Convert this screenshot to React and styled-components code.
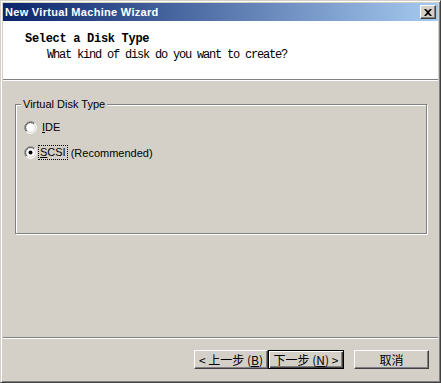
import React from "react";
import styled, { createGlobalStyle } from "styled-components";

const GlobalStyles = createGlobalStyle`
  html, body {
    margin: 0;
    padding: 0;
    width: 441px;
    height: 383px;
    overflow: hidden;
    background: #d4d0c8;
  }
`;

const Window = styled.div`
  box-sizing: border-box;
  width: 441px;
  height: 383px;
  display: flex;
  flex-direction: column;
  background: #d4d0c8;
  border: 1px solid;
  border-color: #d4d0c8 #404040 #404040 #d4d0c8;
  box-shadow: inset 1px 1px 0 #ffffff, inset -1px -1px 0 #808080;
  padding: 2px;
  font-family: "Liberation Sans", Arial, sans-serif;
`;

const TitleBar = styled.div`
  height: 18px;
  flex: 0 0 18px;
  display: flex;
  align-items: center;
  justify-content: space-between;
  padding: 0 2px 0 2px;
  background: linear-gradient(to right, #0a246a, #a6caf0);
`;

const TitleText = styled.span`
  color: #ffffff;
  font-weight: bold;
  font-size: 11px;
  letter-spacing: 0.3px;
`;

const CloseButton = styled.button`
  box-sizing: border-box;
  width: 16px;
  height: 14px;
  padding: 0;
  display: flex;
  align-items: center;
  justify-content: center;
  background: #d4d0c8;
  border: 1px solid;
  border-color: #ffffff #404040 #404040 #ffffff;
  box-shadow: inset -1px -1px 0 #808080;
`;

const Header = styled.div`
  height: 58px;
  flex: 0 0 58px;
  box-sizing: border-box;
  background: #ffffff;
  padding: 11px 0 0 22px;
  font-family: "Liberation Mono", "Noto Sans CJK SC", monospace;
  font-size: 12px;
  color: #000000;
`;

const Heading = styled.div`
  font-weight: bold;
  letter-spacing: -0.3px;
  line-height: 14px;
`;

const SubHeading = styled.div`
  margin: 2px 0 0 22px;
  letter-spacing: -1.2px;
  line-height: 14px;
`;

const Separator = styled.div`
  flex: 0 0 0;
  border-top: 1px solid #808080;
  border-bottom: 1px solid #ffffff;
`;

const Body = styled.div`
  flex: 1;
  padding: 23px 11px 0 12px;
`;

const GroupBox = styled.section`
  position: relative;
  box-sizing: border-box;
  height: 130px;
  padding: 15px 0 0 8px;
  border: 1px solid #808080;
  box-shadow: inset 1px 1px 0 #ffffff, 1px 1px 0 #ffffff;
  display: flex;
  flex-direction: column;
  gap: 10px;
`;

const Legend = styled.span`
  position: absolute;
  top: -7px;
  left: 5px;
  padding: 0 2px;
  font-size: 11px;
  line-height: 13px;
  color: #000000;
  background: #d4d0c8;
`;

const Option = styled.label`
  display: flex;
  align-items: center;
  height: 15px;
  font-size: 11px;
  color: #000000;
`;

const OptionText = styled.span`
  margin-left: ${(p) => (p.$focused ? "1px" : "3px")};
  padding: 0 1px;
  line-height: 13px;
  border: 1px dotted ${(p) => (p.$focused ? "#000000" : "transparent")};
`;

const Extra = styled.span`
  margin-left: 3px;
`;

const ButtonBar = styled.div`
  flex: 0 0 41px;
  box-sizing: border-box;
  display: flex;
  justify-content: flex-end;
  align-items: flex-start;
  padding: 11px 9px 0 0;
`;

const Button = styled.button`
  box-sizing: border-box;
  width: ${(p) => p.$width}px;
  height: 19px;
  margin-left: ${(p) => p.$gap || 0}px;
  padding: 0;
  background: #d4d0c8;
  font-family: "Noto Sans CJK SC", "Liberation Sans", sans-serif;
  font-size: 12px;
  line-height: 15px;
  color: #000000;
  border: 1px solid;
  border-color: ${(p) =>
    p.$default ? "#000000" : "#ffffff #404040 #404040 #ffffff"};
  box-shadow: ${(p) =>
    p.$default
      ? "inset 1px 1px 0 #ffffff, inset -1px -1px 0 #404040, inset -2px -2px 0 #808080"
      : "inset -1px -1px 0 #808080"};
  display: flex;
  align-items: center;
  justify-content: center;
  white-space: pre;
`;

function Radio({ checked }) {
  return (
    <svg width="13" height="13" viewBox="0 0 13 13">
      <circle cx="6.5" cy="6.5" r="6" fill="#ffffff" />
      <path d="M2.26 10.74 A6 6 0 0 1 10.74 2.26" fill="none" stroke="#808080" strokeWidth="1" />
      <path d="M10.74 2.26 A6 6 0 0 1 2.26 10.74" fill="none" stroke="#ffffff" strokeWidth="1" />
      <path d="M3.02 9.98 A4.9 4.9 0 0 1 9.98 3.02" fill="none" stroke="#404040" strokeWidth="1" />
      <path d="M9.98 3.02 A4.9 4.9 0 0 1 3.02 9.98" fill="none" stroke="#d4d0c8" strokeWidth="1" />
      {checked && <circle cx="6.5" cy="6.5" r="2" fill="#000000" />}
    </svg>
  );
}

export default function App() {
  return (
    <>
      <GlobalStyles />
      <Window>
        <TitleBar>
          <TitleText>New Virtual Machine Wizard</TitleText>
          <CloseButton aria-label="Close">
            <svg width="8" height="7" viewBox="0 0 8 7">
              <path d="M0 0h2l2 2 2-2h2L5 3.5 8 7H6L4 5 2 7H0l3-3.5z" fill="#000000" />
            </svg>
          </CloseButton>
        </TitleBar>
        <Header>
          <Heading>Select a Disk Type</Heading>
          <SubHeading>What kind of disk do you want to create?</SubHeading>
        </Header>
        <Separator />
        <Body>
          <GroupBox>
            <Legend>Virtual Disk Type</Legend>
            <Option>
              <Radio />
              <OptionText>
                <u>I</u>DE
              </OptionText>
            </Option>
            <Option>
              <Radio checked />
              <OptionText $focused>
                <u>S</u>CSI
              </OptionText>
              <Extra>(Recommended)</Extra>
            </Option>
          </GroupBox>
        </Body>
        <Separator />
        <ButtonBar>
          <Button $width={74}>
            {"< 上一步 ("}
            <u>B</u>
            {")"}
          </Button>
          <Button $width={76} $default>
            {"下一步 ("}
            <u>N</u>
            {") >"}
          </Button>
          <Button $width={75} $gap={10}>
            取消
          </Button>
        </ButtonBar>
      </Window>
    </>
  );
}
